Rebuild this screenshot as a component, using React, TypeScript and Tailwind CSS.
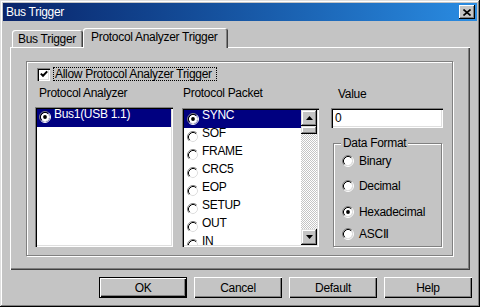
import React from "react";

function Radio({ checked = false }: { checked?: boolean }) {
  return (
    <svg width="12" height="12" viewBox="0 0 12 12" className="shrink-0 block">
      <circle cx="6" cy="6" r="4.2" fill="#fff" />
      <path d="M2.11 9.89 A5.5 5.5 0 0 1 9.89 2.11" stroke="#808080" strokeWidth="1" fill="none" />
      <path d="M9.89 2.11 A5.5 5.5 0 0 1 2.11 9.89" stroke="#fff" strokeWidth="1" fill="none" />
      <path d="M2.82 9.18 A4.5 4.5 0 0 1 9.18 2.82" stroke="#000" strokeWidth="1" fill="none" />
      <path d="M9.18 2.82 A4.5 4.5 0 0 1 2.82 9.18" stroke="#dfdfdf" strokeWidth="1" fill="none" />
      {checked && <circle cx="6" cy="6" r="1.9" fill="#000" />}
    </svg>
  );
}

function Arrow({ up }: { up?: boolean }) {
  return (
    <svg width="7" height="4" viewBox="0 0 7 4" className="block">
      {up ? <path d="M3.5 0 L7 4 L0 4 Z" fill="#000" /> : <path d="M0 0 L7 0 L3.5 4 Z" fill="#000" />}
    </svg>
  );
}

const packets = ["SYNC", "SOF", "FRAME", "CRC5", "EOP", "SETUP", "OUT", "IN"];

export default function App() {
  return (
    <div className="w-[480px] h-[307px] overflow-hidden bg-[#c4c4c4] p-[3px] flex flex-col text-black text-[12px] tracking-[-0.3px] font-['Liberation_Sans',Arial,sans-serif] shadow-[inset_-1px_-1px_0_#000,inset_1px_1px_0_#dfdfdf,inset_-2px_-2px_0_#808080,inset_2px_2px_0_#fff]">
      {/* Title bar */}
      <div className="h-[18px] flex items-center bg-linear-to-r from-[#0a246a] to-[#2a8ce2] pl-[3px] pr-[2px]">
        <span className="text-white leading-[14px] tracking-[-0.3px]">Bus Trigger</span>
        <div className="ml-auto w-[16px] h-[14px] bg-[#c4c4c4] flex items-center justify-center shadow-[inset_-1px_-1px_0_#000,inset_1px_1px_0_#fff,inset_-2px_-2px_0_#808080]">
          <svg width="8" height="7" viewBox="0 0 8 7" className="block">
            <path d="M0.5 0.5 L7.5 6.5 M7.5 0.5 L0.5 6.5" stroke="#000" strokeWidth="1.6" />
          </svg>
        </div>
      </div>

      {/* Tab control */}
      <div className="ml-[7px] mt-[7px] w-[460px] flex flex-col">
        <div className="h-[19px] flex items-end relative z-10">
          <div className="ml-[2px] w-[71px] h-[17px] pl-[6px] pt-[2px] leading-[14px] rounded-t-[3px] shadow-[inset_1px_1px_0_#fff,inset_-1px_0_0_#404040,inset_-2px_0_0_#808080]">
            Bus Trigger
          </div>
          <div className="w-[145px] h-[20px] -mb-[1px] pl-[8px] pt-[2px] leading-[14px] bg-[#c4c4c4] rounded-t-[3px] shadow-[inset_1px_1px_0_#fff,inset_-1px_0_0_#404040,inset_-2px_0_0_#808080]">
            Protocol Analyzer Trigger
          </div>
        </div>
        <div className="h-[223px] w-[460px] pt-[14px] pl-[16px] shadow-[inset_1px_1px_0_#fff,inset_-1px_-1px_0_#404040,inset_-2px_-2px_0_#808080]">
          {/* etched group */}
          <div className="w-[427px] h-[195px] border border-[#808080] shadow-[1px_1px_0_#fff,inset_1px_1px_0_#fff] pl-[8px] pt-[5px] flex flex-col">
            <div className="h-[14px] ml-[2px] flex items-center">
              <div className="w-[13px] h-[13px] bg-white flex items-center justify-center shadow-[inset_1px_1px_0_#808080,inset_2px_2px_0_#000,inset_-1px_-1px_0_#fff,inset_-2px_-2px_0_#dfdfdf]">
                <svg width="8" height="8" viewBox="0 0 8 8" className="block">
                  <path d="M0.8 3.6 L3 5.8 L7.2 1.4" stroke="#000" strokeWidth="2" fill="none" />
                </svg>
              </div>
              <div className="ml-[3px] h-[14px] w-[164px] border border-dotted border-black pl-[1px] leading-[12px]">
                Allow Protocol Analyzer Trigger
              </div>
            </div>

            <div className="mt-[5px] flex">
              {/* Column 1 */}
              <div className="w-[138px] flex flex-col">
                <div className="h-[15px] leading-[15px] pl-[4px]">Protocol Analyzer</div>
                <div className="mt-[6px] h-[140px] bg-white p-[2px] shadow-[inset_1px_1px_0_#808080,inset_2px_2px_0_#000,inset_-1px_-1px_0_#fff,inset_-2px_-2px_0_#dfdfdf]">
                  <div className="h-[18px] bg-[#000080] text-white flex items-start pl-[2px]">
                    <div className="mt-[2px]"><Radio checked /></div>
                    <span className="ml-[3px] leading-[10px]">Bus1(USB 1.1)</span>
                  </div>
                </div>
              </div>

              {/* Column 2 */}
              <div className="ml-[9px] w-[137px] flex flex-col">
                <div className="h-[15px] leading-[15px] pl-[1px]">Protocol Packet</div>
                <div className="mt-[7px] h-[139px] bg-white p-[2px] flex shadow-[inset_1px_1px_0_#808080,inset_2px_2px_0_#000,inset_-1px_-1px_0_#fff,inset_-2px_-2px_0_#dfdfdf]">
                  <div className="w-[117px] h-full flex flex-col">
                    {packets.map((p, i) => (
                      <div
                        key={p}
                        className={
                          i === 0
                            ? "h-[18px] shrink-0 bg-[#000080] text-white flex items-start pl-[3px]"
                            : i === packets.length - 1
                            ? "h-[9px] shrink-0 overflow-hidden flex items-start pl-[3px]"
                            : "h-[18px] shrink-0 flex items-start pl-[3px]"
                        }
                      >
                        <div className="mt-[3px]"><Radio checked={i === 0} /></div>
                        <span className="ml-[3px] leading-[11px]">{p}</span>
                      </div>
                    ))}
                  </div>
                  <div className="w-[16px] h-full flex flex-col">
                    <div className="h-[16px] bg-[#c4c4c4] flex items-center justify-center shadow-[inset_-1px_-1px_0_#000,inset_1px_1px_0_#dfdfdf,inset_-2px_-2px_0_#808080,inset_2px_2px_0_#fff]">
                      <Arrow up />
                    </div>
                    <div className="h-[8px] bg-[#c4c4c4] shadow-[inset_-1px_-1px_0_#000,inset_1px_1px_0_#dfdfdf,inset_-2px_-2px_0_#808080,inset_2px_2px_0_#fff]" />
                    <div className="flex-1 bg-[repeating-conic-gradient(#c4c4c4_0_25%,#ffffff_0_50%)] bg-[length:2px_2px]" />
                    <div className="h-[16px] bg-[#c4c4c4] flex items-center justify-center shadow-[inset_-1px_-1px_0_#000,inset_1px_1px_0_#dfdfdf,inset_-2px_-2px_0_#808080,inset_2px_2px_0_#fff]">
                      <Arrow />
                    </div>
                  </div>
                </div>
              </div>

              {/* Column 3 */}
              <div className="ml-[12px] w-[112px] flex flex-col">
                <div className="h-[15px] leading-[15px] pl-[7px] mt-[1px]">Value</div>
                <div className="mt-[6px] h-[20px] bg-white pl-[4px] flex items-center leading-[14px] shadow-[inset_1px_1px_0_#808080,inset_2px_2px_0_#000,inset_-1px_-1px_0_#fff,inset_-2px_-2px_0_#dfdfdf]">
                  0
                </div>
                <div className="relative mt-[15px] ml-[2px] w-[109px] h-[104px] border border-[#808080] shadow-[1px_1px_0_#fff,inset_1px_1px_0_#fff] flex flex-col">
                  <span className="absolute -top-[8px] left-[7px] px-[2px] bg-[#c4c4c4] leading-[14px]">Data Format</span>
                  <div className="mt-[10px] h-[14px] pl-[8px] flex items-center">
                    <Radio />
                    <span className="ml-[5px] leading-[14px]">Binary</span>
                  </div>
                  <div className="mt-[11px] h-[14px] pl-[8px] flex items-center">
                    <Radio />
                    <span className="ml-[5px] leading-[14px]">Decimal</span>
                  </div>
                  <div className="mt-[12px] h-[14px] pl-[8px] flex items-center">
                    <Radio checked />
                    <span className="ml-[5px] leading-[14px]">Hexadecimal</span>
                  </div>
                  <div className="mt-[8px] h-[14px] pl-[8px] flex items-center">
                    <Radio />
                    <span className="ml-[5px] leading-[14px]">ASCⅡ</span>
                  </div>
                </div>
              </div>
            </div>
          </div>
        </div>
      </div>

      {/* Buttons */}
      <div className="mt-[7px] ml-[96px] flex gap-[7px]">
        <div className="w-[88px] h-[21px] flex items-center justify-center leading-[14px] shadow-[inset_0_0_0_1px_#000,inset_2px_2px_0_#fff,inset_-2px_-2px_0_#000,inset_-3px_-3px_0_#808080]">
          OK
        </div>
        <div className="w-[88px] h-[21px] flex items-center justify-center leading-[14px] shadow-[inset_1px_1px_0_#fff,inset_-1px_-1px_0_#000,inset_-2px_-2px_0_#808080]">
          Cancel
        </div>
        <div className="w-[88px] h-[21px] flex items-center justify-center leading-[14px] shadow-[inset_1px_1px_0_#fff,inset_-1px_-1px_0_#000,inset_-2px_-2px_0_#808080]">
          Default
        </div>
        <div className="w-[88px] h-[21px] flex items-center justify-center leading-[14px] shadow-[inset_1px_1px_0_#fff,inset_-1px_-1px_0_#000,inset_-2px_-2px_0_#808080]">
          Help
        </div>
      </div>
    </div>
  );
}
